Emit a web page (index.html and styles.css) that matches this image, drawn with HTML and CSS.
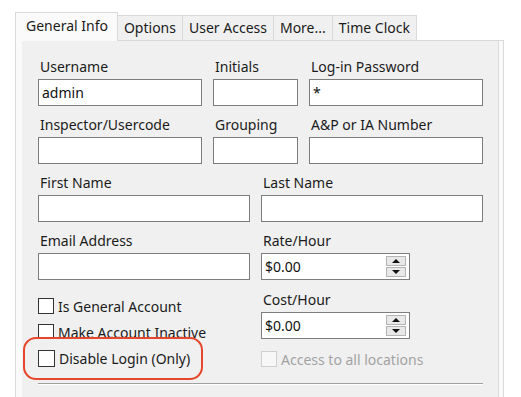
FILE: index.html
```html
<!DOCTYPE html>
<html lang="en">
<head>
    <meta charset="UTF-8">
    <title>User - General Info</title>
    <link rel="stylesheet" href="styles.css">
</head>
<body>
    <div class="window">
        <div class="tab-strip">
            <div class="tab active">General Info</div>
            <div class="tab">Options</div>
            <div class="tab">User Access</div>
            <div class="tab">More...</div>
            <div class="tab">Time Clock</div>
        </div>

        <div class="tab-frame">
            <div class="tab-page">
                <div class="grid-3">
                    <div class="field">
                        <label>Username</label>
                        <input type="text" value="admin">
                    </div>
                    <div class="field">
                        <label>Initials</label>
                        <input type="text">
                    </div>
                    <div class="field">
                        <label>Log-in Password</label>
                        <input type="text" value="*">
                    </div>
                    <div class="field">
                        <label>Inspector/Usercode</label>
                        <input type="text">
                    </div>
                    <div class="field">
                        <label>Grouping</label>
                        <input type="text">
                    </div>
                    <div class="field">
                        <label>A&amp;P or IA Number</label>
                        <input type="text">
                    </div>
                </div>

                <div class="grid-2">
                    <div class="field">
                        <label>First Name</label>
                        <input type="text">
                    </div>
                    <div class="field">
                        <label>Last Name</label>
                        <input type="text">
                    </div>
                </div>

                <div class="grid-2 lower">
                    <div class="col">
                        <div class="field">
                            <label>Email Address</label>
                            <input type="text">
                        </div>
                        <div class="checks">
                            <div class="check"><span class="box"></span>Is General Account</div>
                            <div class="check"><span class="box"></span>Make Account Inactive</div>
                            <div class="highlight">
                                <div class="check"><span class="box"></span>Disable Login (Only)</div>
                            </div>
                        </div>
                    </div>

                    <div class="col">
                        <div class="field">
                            <label>Rate/Hour</label>
                            <div class="spin">
                                <span class="spin-value">$0.00</span>
                                <span class="spin-buttons">
                                    <span class="spin-btn"><span class="arrow-up"></span></span>
                                    <span class="spin-btn"><span class="arrow-down"></span></span>
                                </span>
                            </div>
                        </div>
                        <div class="field cost">
                            <label>Cost/Hour</label>
                            <div class="spin">
                                <span class="spin-value">$0.00</span>
                                <span class="spin-buttons">
                                    <span class="spin-btn"><span class="arrow-up"></span></span>
                                    <span class="spin-btn"><span class="arrow-down"></span></span>
                                </span>
                            </div>
                        </div>
                        <div class="check disabled"><span class="box"></span>Access to all locations</div>
                    </div>
                </div>

                <div class="separator"></div>
            </div>
        </div>
    </div>
</body>
</html>
```

FILE: styles.css
```css
/* Page */
body {
    margin: 0;
    background-color: #fff;
    font-family: "Noto Sans", "Liberation Sans", sans-serif;
    font-size: 14px;
    color: #1b1b1b;
    overflow: hidden;
}

.window {
    padding: 12px 17px 0 15px;
}

/* Tabs */
.tab-strip {
    display: flex;
    align-items: flex-end;
    height: 28px;
}

.tab {
    height: 25px;
    line-height: 23px;
    padding: 0 6px;
    box-sizing: border-box;
    background-color: #f0f0f0;
    border: 1px solid #d9d9d9;
    border-left: none;
    border-bottom: none;
    white-space: nowrap;
}

.tab.active {
    position: relative;
    height: 29px;
    margin-bottom: -1px;
    padding: 0 9px 0 10px;
    line-height: 26px;
    background-color: #fafafa;
    border-left: 1px solid #d9d9d9;
}

/* Tab page */
.tab-frame {
    height: 380px;
    padding: 0 4px 0 6px;
    background-color: #fafafa;
    border: 1px solid #d9d9d9;
}

.tab-page {
    height: 100%;
    padding: 17px 15px 0 16px;
    background-color: #f0f0f0;
    border-right: 1px solid #dcdcdc;
}

/* Fields */
.grid-3 {
    display: grid;
    grid-template-columns: 164px 85px 1fr;
    column-gap: 11px;
    row-gap: 10px;
}

.grid-2 {
    display: grid;
    grid-template-columns: 212px 1fr;
    column-gap: 11px;
    margin-top: 10px;
}

.field label {
    display: block;
    height: 18px;
    line-height: 18px;
    margin: 0 0 3px 2px;
    white-space: nowrap;
}

.field input {
    display: block;
    width: 100%;
    height: 27px;
    box-sizing: border-box;
    padding: 0 3px;
    border: 1px solid #7d7d7d;
    background-color: #fff;
    font: inherit;
    color: #111;
}

.field.cost {
    margin-top: 11px;
}

/* Spinner */
.spin {
    display: flex;
    align-items: center;
    width: 149px;
    height: 27px;
    box-sizing: border-box;
    border: 1px solid #7d7d7d;
    background-color: #fff;
}

.spin-value {
    flex: 1;
    padding-left: 3px;
    color: #111;
}

.spin-buttons {
    display: flex;
    flex-direction: column;
    gap: 1px;
    margin-right: 3px;
}

.spin-btn {
    display: flex;
    align-items: center;
    justify-content: center;
    width: 20px;
    height: 10px;
    box-sizing: border-box;
    border: 1px solid #b4b4b4;
    background-color: #e8e8e8;
}

.arrow-up,
.arrow-down {
    width: 0;
    height: 0;
    border-left: 4px solid transparent;
    border-right: 4px solid transparent;
}

.arrow-up {
    border-bottom: 4px solid #111;
}

.arrow-down {
    border-top: 4px solid #111;
}

/* Checkboxes */
.checks {
    margin-top: 13px;
}

.check {
    display: flex;
    align-items: center;
    gap: 4px;
    height: 26px;
    white-space: nowrap;
}

.box {
    width: 16px;
    height: 16px;
    box-sizing: border-box;
    border: 1px solid #333;
    background-color: #fff;
}

.check.disabled {
    margin-top: 7px;
    color: #a3a3a3;
}

.check.disabled .box {
    border-color: #cfcfcf;
    background-color: #f7f7f7;
}

/* Red annotation around "Disable Login" */
.highlight {
    position: relative;
    display: flex;
    align-items: center;
    width: 180px;
    height: 43px;
    box-sizing: border-box;
    margin: -8px 0 0 -15px;
    padding-left: 13px;
    border: 2px solid #e6472c;
    border-radius: 13px;
    background-color: #f0f0f0;
}

.highlight .box {
    width: 17px;
    height: 17px;
}

/* Group box edge at the bottom */
.separator {
    margin-top: 3px;
    border-top: 1px solid #a0a0a0;
    border-bottom: 1px solid #fff;
}
```
